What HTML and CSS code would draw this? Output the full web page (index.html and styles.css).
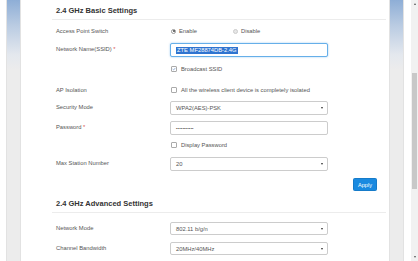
FILE: index.html
```html
<!DOCTYPE html>
<html>
<head>
<meta charset="utf-8">
<link rel="stylesheet" href="styles.css">
</head>
<body>
<div class="page">
  <div class="edge"></div>
  <div class="rail"></div>
  <main class="card">
    <section class="section">
      <h2 class="title">2.4 GHz Basic Settings</h2>
      <div class="row row-switch">
        <div class="label">Access Point Switch</div>
        <div class="ctrl radios">
          <span class="radio on"></span><span class="rtext">Enable</span>
          <span class="radio off"></span><span class="rtext">Disable</span>
        </div>
      </div>
      <div class="row row-ssid">
        <div class="label">Network Name(SSID) <span class="req">*</span></div>
        <div class="ctrl"><div class="field focus"><span class="sel">ZTE MF28874DB-2.4G</span></div></div>
      </div>
      <div class="row row-check1">
        <div class="label"></div>
        <div class="ctrl check"><span class="box checked"><svg viewBox="0 0 8 8" width="6" height="6"><path d="M1.3 4.2 L3.2 6 L6.8 1.8" fill="none" stroke="#3a6fb5" stroke-width="1"/></svg></span><span class="ctext">Broadcast SSID</span></div>
      </div>
      <div class="row row-ap">
        <div class="label">AP Isolation</div>
        <div class="ctrl check"><span class="box"></span><span class="ctext">All the wireless client device is completely isolated</span></div>
      </div>
      <div class="row row-sec">
        <div class="label">Security Mode</div>
        <div class="ctrl"><div class="field select"><span>WPA2(AES)-PSK</span><span class="arrow"></span></div></div>
      </div>
      <div class="row row-pwd">
        <div class="label">Password <span class="req">*</span></div>
        <div class="ctrl"><div class="field"><span class="dots">•••••••••••</span></div></div>
      </div>
      <div class="row row-check2">
        <div class="label"></div>
        <div class="ctrl check"><span class="box"></span><span class="ctext">Display Password</span></div>
      </div>
      <div class="row row-max">
        <div class="label">Max Station Number</div>
        <div class="ctrl"><div class="field select"><span>20</span><span class="arrow"></span></div></div>
      </div>
      <div class="actions"><button class="apply">Apply</button></div>
    </section>
    <section class="section adv">
      <h2 class="title">2.4 GHz Advanced Settings</h2>
      <div class="row row-mode">
        <div class="label">Network Mode</div>
        <div class="ctrl"><div class="field select short"><span>802.11 b/g/n</span><span class="arrow"></span></div></div>
      </div>
      <div class="row row-bw">
        <div class="label">Channel Bandwidth</div>
        <div class="ctrl"><div class="field select short"><span>20MHz/40MHz</span><span class="arrow"></span></div></div>
      </div>
    </section>
  </main>
  <div class="rail"></div>
  <div class="edge2"></div>
  <div class="scrollbar">
    <span class="sb-up"></span>
    <div class="sb-track"><div class="sb-thumb"></div></div>
    <span class="sb-down"></span>
  </div>
</div>
</body>
</html>
```

FILE: styles.css
```css
* { box-sizing: border-box; }
html, body { margin: 0; padding: 0; background: #fff; }
body {
  font-family: "Liberation Sans", Arial, sans-serif;
  color: #555;
  font-size: 5.8px;
}
.page {
  display: flex;
  width: 418px;
  height: 261px;
  overflow: hidden;
}
.edge { width: 6px; background: #fff; }
.rail {
  width: 15px;
  background: linear-gradient(#8eaed6 0px, #b9cbe2 25px, #e4e8ee 55px, #ececec 70px, #ececec 100%);
  border-left: 1px solid #e2e2e2;
  border-right: 1px solid #e2e2e2;
}
.edge2 { width: 7px; background: #fff; }
.card {
  width: 368px;
  background: #fff;
  padding: 0 3px 0 31px;
}
.section { display: flex; flex-direction: column; }
.title {
  margin: 6px 0 0 0;
  padding: 0 0 3px 4px;
  font-size: 7.5px;
  line-height: 10px;
  font-weight: bold;
  color: #333;
  border-bottom: 1px solid #ececec;
}
.row {
  display: flex;
  align-items: flex-start;
  padding-left: 4px;
}
.label {
  width: 114px;
  padding-top: 2px;
  line-height: 8px;
  color: #555;
  white-space: nowrap;
}
.req { color: #d9534f; }
.ctrl { display: flex; align-items: center; }
.row-switch { margin-top: 6px; height: 10px; }
.row-switch .label { padding-top: 1px; }
.radios { height: 10px; }
.radio {
  width: 5px; height: 5px;
  border-radius: 50%;
  border: 1px solid #bbb;
  background: #eee;
  margin-left: 1px;
  position: relative;
}
.radio.on { border-color: #999; background: #fff; }
.radio.on::after {
  content: ""; position: absolute; left: 0.5px; top: 0.5px;
  width: 2px; height: 2px; border-radius: 50%; background: #444;
}
.radio.off { margin-left: 0; background: #e6e6e6; border-color: #ccc; }
.rtext { margin-left: 3px; width: 54px; }
.row-ssid { margin-top: 7px; }
.field {
  width: 158px;
  height: 14px;
  border: 1px solid #ccc;
  border-radius: 2px;
  display: flex;
  align-items: center;
  padding-left: 5px;
  background: #fff;
  color: #555;
}
.field.focus {
  border-color: #66afe9;
  box-shadow: 0 0 2px rgba(102,175,233,0.7);
}
.sel { background: #2f74d0; color: #fff; line-height: 7px; padding: 0 1px; }
.dots { font-size: 4px; letter-spacing: 0.2px; color: #444; }
.row-check1 { margin-top: 7px; height: 10px; }
.check { height: 10px; }
.box {
  width: 6px; height: 6px;
  border: 1px solid #aaa;
  border-radius: 1px;
  background: #fff;
  display: flex; align-items: center; justify-content: center;
  margin-left: 1px;
}
.box svg { display: block; }
.ctext { margin-left: 4px; white-space: nowrap; }
.row-ap { margin-top: 11px; height: 10px; }
.row-ap .label, .row-check2 .label { padding-top: 1px; }
.row-sec { margin-top: 6px; }
.row-pwd { margin-top: 6px; }
.row-check2 { margin-top: 5px; height: 10px; }
.row-max { margin-top: 7px; }
.select { justify-content: space-between; padding-right: 4px; }
.arrow {
  width: 0; height: 0;
  border-left: 1.5px solid transparent;
  border-right: 1.5px solid transparent;
  border-top: 2px solid #333;
}
.actions { display: flex; justify-content: flex-end; margin-top: 7px; padding-right: 9px; }
.apply {
  width: 24px; height: 13px;
  background: #1a8ae0;
  border: 1px solid #167bc9;
  border-radius: 1.5px;
  color: #fff;
  font-family: "Liberation Sans", Arial, sans-serif;
  font-size: 5.6px;
  padding: 0;
}
.adv .title { margin-top: 8px; }
.row-mode { margin-top: 9px; }
.row-bw { margin-top: 7px; }
.short { height: 13px; }
.scrollbar {
  width: 7px;
  background: #f1f1f1;
  display: flex;
  flex-direction: column;
  align-items: center;
}
.sb-up {
  margin-top: 3px;
  width: 0; height: 0;
  border-left: 1.5px solid transparent;
  border-right: 1.5px solid transparent;
  border-bottom: 2px solid #555;
}
.sb-track { flex: 1; width: 100%; padding-top: 68px; padding-bottom: 67px; display: flex; justify-content: center; }
.sb-thumb { width: 5px; height: 100%; background: #c8c8c8; }
.sb-down {
  margin-bottom: 3px;
  width: 0; height: 0;
  border-left: 1.5px solid transparent;
  border-right: 1.5px solid transparent;
  border-top: 2px solid #555;
}
```
